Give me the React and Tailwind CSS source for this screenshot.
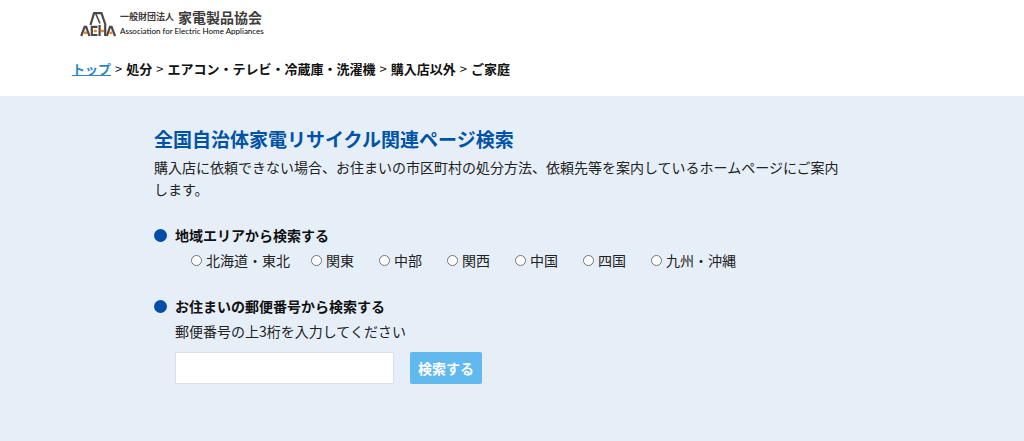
import { useState } from 'react';

const crumbs = ['処分', 'エアコン・テレビ・冷蔵庫・洗濯機', '購入店以外', 'ご家庭'];

const areas = ['北海道・東北', '関東', '中部', '関西', '中国', '四国', '九州・沖縄'];

const LogoMark = () => (
  <svg viewBox="0 0 36 26" className="w-9 h-[26px]" fill="none" stroke="#4d4745" strokeWidth="2.2" aria-hidden="true">
    <path d="M10.5 14 L14 2.2 H21.5 L25.5 14" />
    <path d="M15.5 2.2 L20 12.5" strokeWidth="1.6" />
    <path d="M1.2 25 L4.6 15.8 H6.2 L9.4 25" />
    <path d="M17.5 15.8 H11.8 V24 H17.5" />
    <path d="M19.6 14 V25 M25.2 14 V25" />
    <path d="M26.8 25 L30 15.8 H31.6 L35 25" />
    <path d="M4 21.8 h3 M13.8 20 h3 M21 20 h3 M29.4 21.8 h3" stroke="#e8862e" strokeWidth="2.4" />
  </svg>
);

const SectionTitle = ({ id, children }) => (
  <h2 id={id} className="flex items-center gap-2 text-sm leading-[22px] font-bold text-[#111]">
    <span className="w-[13px] h-[13px] rounded-full bg-[#004ea8]" />
    {children}
  </h2>
);

const App = () => {
  const [area, setArea] = useState('');
  const [zip, setZip] = useState('');

  return (
    <div className="min-h-screen flex flex-col bg-[#e6eef8] font-['Noto_Sans_CJK_JP',sans-serif] text-[#222]">
      <header className="bg-white px-[72px] pt-2 pb-4">
        <a href="#" className="flex w-fit items-center gap-1 pl-2 text-[#3e3a39]">
          <LogoMark />
          <span className="flex flex-col pb-1">
            <span className="flex items-center gap-1 leading-[18px]">
              <span className="text-[9px] font-bold">一般財団法人</span>
              <span className="text-sm leading-[18px] font-bold">家電製品協会</span>
            </span>
            <span className="font-['Lato',sans-serif] text-[8px] leading-[10px] text-black">
              Association for Electric Home Appliances
            </span>
          </span>
        </a>
        <nav aria-label="breadcrumb" className="mt-[18px]">
          <ol className="flex flex-wrap gap-1 text-[13px] leading-[22px] font-bold text-[#111]">
            <li>
              <a href="#" className="text-[#2a86cf] underline">トップ</a>
            </li>
            {crumbs.map((crumb) => (
              <li key={crumb} className="flex gap-1">
                <span className="font-normal">&gt;</span>
                {crumb}
              </li>
            ))}
          </ol>
        </nav>
      </header>

      <main className="w-full max-w-[716px] mx-auto pt-7 pb-12">
        <h1 className="text-[19px] leading-[30px] font-bold text-[#0052a8]">
          全国自治体家電リサイクル関連ページ検索
        </h1>
        <p className="mt-0.5 pr-6 text-sm leading-[22px]">
          購入店に依頼できない場合、お住まいの市区町村の処分方法、依頼先等を案内しているホームページにご案内します。
        </p>

        <section className="mt-6">
          <SectionTitle id="area-title">地域エリアから検索する</SectionTitle>
          <div role="radiogroup" aria-labelledby="area-title" className="mt-[3px] ml-[37px] flex flex-wrap">
            {areas.map((name, i) => (
              <label
                key={name}
                className={`flex items-center gap-1 text-sm leading-[22px] ${i === 0 ? 'w-[120px]' : 'min-w-[68px]'}`}
              >
                <input
                  type="radio"
                  name="area"
                  value={name}
                  checked={area === name}
                  onChange={() => setArea(name)}
                  className="appearance-none w-[11px] h-[11px] rounded-full border border-[#767676] bg-white checked:border-4 checked:border-[#004ea8]"
                />
                {name}
              </label>
            ))}
          </div>
        </section>

        <section className="mt-6">
          <SectionTitle>お住まいの郵便番号から検索する</SectionTitle>
          <form className="ml-[21px] mt-[3px]" onSubmit={(e) => e.preventDefault()}>
            <label htmlFor="zip" className="block text-sm leading-[22px]">
              郵便番号の上3桁を入力してください
            </label>
            <div className="mt-2.5 flex flex-wrap gap-4">
              <input
                id="zip"
                type="text"
                inputMode="numeric"
                maxLength={3}
                value={zip}
                onChange={(e) => setZip(e.target.value)}
                className="w-[219px] h-8 px-2 text-sm border border-[#dcdfe3] bg-white"
              />
              <button type="submit" className="h-8 w-[72px] rounded-xs bg-[#62b9ee] text-sm font-bold text-white hover:bg-[#4aa9e2]">
                検索する
              </button>
            </div>
          </form>
        </section>
      </main>
    </div>
  );
};

export default App;
